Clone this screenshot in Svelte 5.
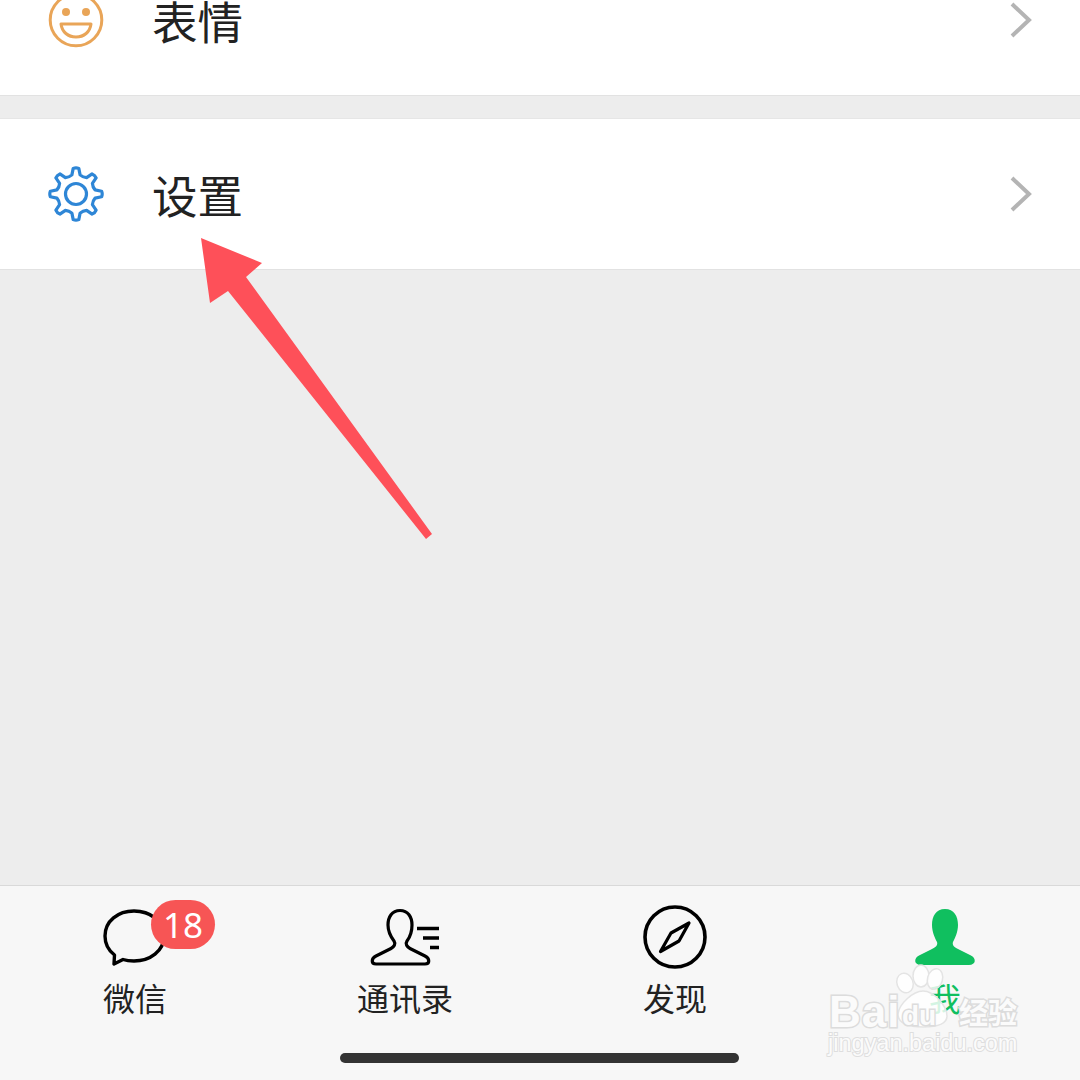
<script>
	// gear outline with rounded valleys, centred on 0,0
	function gearPath(teeth, outer, inner) {
		let d = '';
		const step = (Math.PI * 2) / teeth;
		const at = (r, t) => `${(r * Math.cos(t)).toFixed(1)} ${(r * Math.sin(t)).toFixed(1)}`;
		for (let i = 0; i < teeth; i++) {
			const a = i * step - Math.PI / 2;
			d += i === 0 ? `M${at(inner, a - step * 0.27)} ` : `Q${at(inner - 1.5, a - step * 0.5)} ${at(inner, a - step * 0.27)} `;
			d += `L${at(outer, a - step * 0.14)} Q${at(outer + 1, a)} ${at(outer, a + step * 0.14)} L${at(inner, a + step * 0.27)} `;
		}
		const last = -Math.PI / 2 - step * 0.5;
		return d + `Q${at(inner - 1.5, last)} ${at(inner, -Math.PI / 2 - step * 0.27)} Z`;
	}

	const gear = gearPath(8, 25.8, 19.5);
</script>

<div class="phone">
	<div class="list">
		<div class="row first">
			<svg class="row-icon" viewBox="-28 -28 56 56" aria-hidden="true">
				<circle r="25.8" fill="none" stroke="#e9a558" stroke-width="3" />
				<circle cx="-10" cy="-8" r="4" fill="#e9a558" />
				<circle cx="10" cy="-8" r="4" fill="#e9a558" />
				<path d="M-15 4 H15 C14 12 8 17 0 17 C-8 17 -14 12 -15 4 Z" fill="none" stroke="#e9a558" stroke-width="3" stroke-linejoin="round" />
			</svg>
			<span class="label">表情</span>
			<svg class="chevron" viewBox="0 0 24 40" aria-hidden="true">
				<path d="M3 4 L20 20 L3 36" fill="none" stroke="#b4b4b4" stroke-width="4" />
			</svg>
		</div>

		<div class="row second">
			<svg class="row-icon" viewBox="-28 -28 56 56" aria-hidden="true">
				<path d={gear} fill="none" stroke="#2e86d6" stroke-width="3.2" stroke-linejoin="round" />
				<circle r="10.5" fill="none" stroke="#2e86d6" stroke-width="3.2" />
			</svg>
			<span class="label">设置</span>
			<svg class="chevron" viewBox="0 0 24 40" aria-hidden="true">
				<path d="M3 4 L20 20 L3 36" fill="none" stroke="#b4b4b4" stroke-width="4" />
			</svg>
		</div>
	</div>

	<nav class="tabbar">
		<div class="tab">
			<svg viewBox="95 905 80 64" aria-hidden="true">
				<path d="M114 964 L114.5 955 C108 950 105 943 105 936 C105 921 118 911 134 911 C150 911 164 921 164 936 C164 951 150 961 134 961 C130 961 126 960.5 123 959.5 Z" fill="none" stroke="#000" stroke-width="3.4" stroke-linejoin="round" />
			</svg>
			<span class="badge">18</span>
			<span class="tab-label">微信</span>
		</div>
		<div class="tab">
			<svg viewBox="365 905 80 64" aria-hidden="true">
				<path d="M400 910.5 C392 910.5 388 917 388 925 C388 932 391 937 394 941 C396 944 394 947 391 948.5 L376 956 C371 958.5 371 964 376 964 L425 964 C430 964 430 958.5 425 956 L410 948.5 C407 947 405 944 407 941 C410 937 412 932 412 925 C412 917 408 910.5 400 910.5 Z" fill="none" stroke="#000" stroke-width="3.2" stroke-linejoin="round" />
				<path d="M417 928.5 H439 M423 938 H439 M430 947.5 H439" stroke="#000" stroke-width="3.4" />
			</svg>
			<span class="tab-label">通讯录</span>
		</div>
		<div class="tab">
			<svg viewBox="635 905 80 64" aria-hidden="true">
				<circle cx="675" cy="937" r="30" fill="none" stroke="#000" stroke-width="3.6" />
				<path d="M689 923 L679 941 L660.5 951.5 L671 933 Z" fill="none" stroke="#000" stroke-width="3.2" stroke-linejoin="round" />
			</svg>
			<span class="tab-label">发现</span>
		</div>
		<div class="tab active">
			<svg viewBox="905 905 80 64" aria-hidden="true">
				<path d="M945 909 C936 909 932 916 932 925 C932 932 935 938 937 942 C938 945 936 947 932 949 L920 955 C913 958 914 965 921 965 L969 965 C976 965 977 958 970 955 L958 949 C954 947 952 945 953 942 C955 938 958 932 958 925 C958 916 954 909 945 909 Z" fill="#10bf5f" />
			</svg>
			<span class="tab-label">我</span>
		</div>
		<div class="home-bar"></div>
	</nav>

	<!-- red annotation arrow drawn over the screenshot -->
	<svg class="arrow" viewBox="0 0 1080 1080" aria-hidden="true">
		<path d="M201 238 L262 263 L246 277 L432 534 L426 539 L228 291 L210 303 Z" fill="#fe5059" />
	</svg>

	<div class="watermark">
		<svg class="paw" viewBox="890 960 70 70" aria-hidden="true">
			<ellipse cx="905" cy="983" rx="8" ry="10" transform="rotate(-20 905 983)" />
			<ellipse cx="921" cy="976" rx="8" ry="11" />
			<ellipse cx="935" cy="979" rx="7.5" ry="10.5" transform="rotate(15 935 979)" />
			<path d="M923 991 C934 991 947 1006 947 1016 C947 1025 936 1027 923 1027 C909 1027 898 1024 898 1014 C899 1004 913 991 923 991 Z" />
		</svg>
		<div class="wm-top">
			<span class="wm-bai">Bai</span>
			<span class="wm-du">du</span>
			<span class="wm-jy">经验</span>
		</div>
		<div class="wm-url">jingyan.baidu.com</div>
	</div>
</div>

<style>
	:global(body) {
		background: #ededed;
	}

	.phone {
		position: relative;
		display: flex;
		flex-direction: column;
		justify-content: space-between;
		width: 1080px;
		height: 1080px;
		overflow: hidden;
		background: #ededed;
		font-family: 'Noto Sans CJK SC', 'Noto Sans', sans-serif;
	}

	.list {
		display: flex;
		flex-direction: column;
		gap: 22px;
		margin-top: -55px;
	}

	.row {
		display: flex;
		align-items: center;
		box-sizing: border-box;
		height: 151px;
		padding: 0 47px 0 48px;
		background: #fff;
		border-bottom: 1px solid #e2e2e2;
	}

	.second {
		height: 152px;
		border-top: 1px solid #e6e6e6;
	}

	.row-icon {
		width: 56px;
		height: 56px;
	}

	.label {
		margin-left: 48px;
		font-size: 45.5px;
		line-height: 50px;
		color: #222;
	}

	.chevron {
		width: 24px;
		height: 40px;
		margin-left: auto;
	}

	.tabbar {
		position: relative;
		display: grid;
		grid-template-columns: repeat(4, 270px);
		box-sizing: border-box;
		height: 195px;
		padding-top: 19px;
		background: #f7f7f7;
		border-top: 1px solid #d9d9d9;
	}

	.tab {
		position: relative;
		display: flex;
		flex-direction: column;
		align-items: center;
	}

	.tab svg {
		width: 80px;
		height: 64px;
	}

	.tab-label {
		margin-top: 8px;
		font-size: 32px;
		line-height: 40px;
		color: #222;
	}

	.active .tab-label {
		color: #10bf5f;
	}

	.badge {
		position: absolute;
		top: -5px;
		left: 151px;
		width: 64px;
		height: 49px;
		border-radius: 25px;
		background: #f75555;
		color: #fff;
		font-size: 35px;
		line-height: 49px;
		text-align: center;
		font-family: 'Noto Sans', sans-serif;
	}

	.home-bar {
		position: absolute;
		left: 340px;
		bottom: 17px;
		width: 399px;
		height: 10px;
		border-radius: 5px;
		background: #333;
	}

	.arrow {
		position: absolute;
		inset: 0;
		width: 1080px;
		height: 1080px;
	}

	.watermark {
		position: absolute;
		left: 826px;
		top: 960px;
		width: 200px;
		height: 100px;
		color: #fff;
		font-family: 'Liberation Sans', 'Noto Sans CJK SC', sans-serif;
	}

	.paw {
		position: absolute;
		left: 64px;
		top: 0;
		width: 70px;
		height: 70px;
		fill: #fff;
		stroke: #e4e4e4;
		stroke-width: 1.5;
		fill-opacity: 0.82;
	}

	.wm-top {
		position: absolute;
		inset: 0;
		font-weight: 700;
	}

	.wm-top span {
		position: absolute;
		color: #fbfbfb;
		-webkit-text-stroke: 3px #dcdcdc;
		paint-order: stroke fill;
	}

	.wm-bai {
		left: 3px;
		top: 27px;
		font-size: 44px;
		line-height: 50px;
		letter-spacing: 1px;
	}

	.wm-du {
		left: 76px;
		top: 40px;
		font-size: 28px;
		line-height: 32px;
	}

	.wm-jy {
		left: 133px;
		top: 31px;
		font-size: 29px;
		line-height: 40px;
		font-family: 'Noto Sans CJK SC', sans-serif;
	}

	.wm-url {
		position: absolute;
		left: 2px;
		top: 68px;
		font-size: 23.5px;
		line-height: 30px;
		color: #fbfbfb;
		-webkit-text-stroke: 2px #dedede;
		paint-order: stroke fill;
	}
</style>
